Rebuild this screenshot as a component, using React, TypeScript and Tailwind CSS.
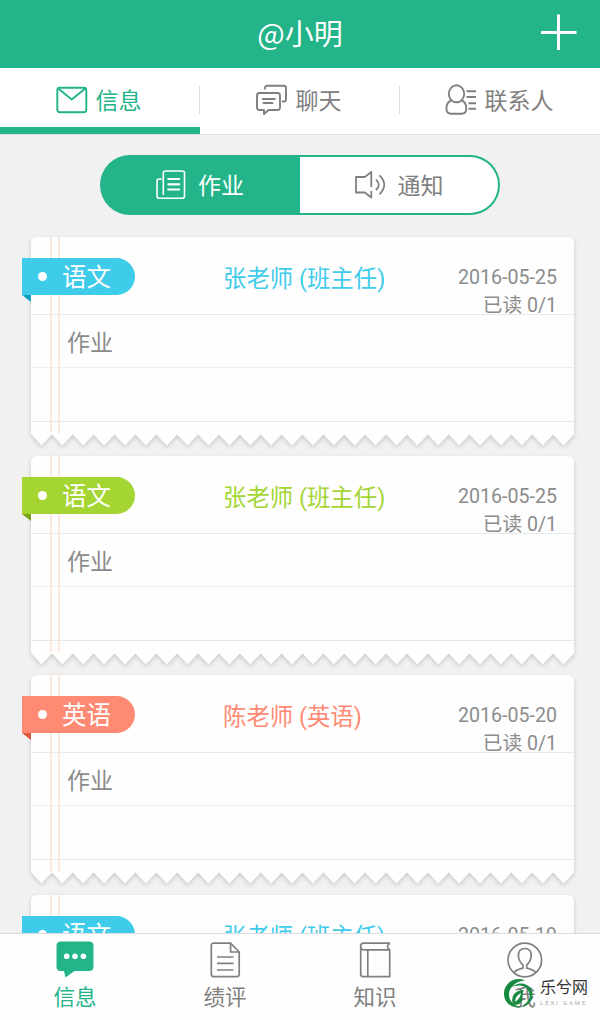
import clsx from "clsx";
import type { ReactNode } from "react";

type Notice = {
  id: number;
  subject: string;
  teacher: string;
  date: string;
  read: string;
  content: string;
  ribbon: string;
  fold: string;
  text: string;
};

const notices: Notice[] = [
  {
    id: 1,
    subject: "语文",
    teacher: "张老师 (班主任)",
    date: "2016-05-25",
    read: "已读 0/1",
    content: "作业",
    ribbon: "bg-[#3fcbea]",
    fold: "text-[#0f9dbb]",
    text: "text-[#3fcbea]",
  },
  {
    id: 2,
    subject: "语文",
    teacher: "张老师 (班主任)",
    date: "2016-05-25",
    read: "已读 0/1",
    content: "作业",
    ribbon: "bg-[#a4d533]",
    fold: "text-[#75a313]",
    text: "text-[#a4d533]",
  },
  {
    id: 3,
    subject: "英语",
    teacher: "陈老师 (英语)",
    date: "2016-05-20",
    read: "已读 0/1",
    content: "作业",
    ribbon: "bg-[#ff8a73]",
    fold: "text-[#d9573c]",
    text: "text-[#ff8a73]",
  },
  {
    id: 4,
    subject: "语文",
    teacher: "张老师 (班主任)",
    date: "2016-05-19",
    read: "已读 0/1",
    content: "作业",
    ribbon: "bg-[#3fcbea]",
    fold: "text-[#0f9dbb]",
    text: "text-[#3fcbea]",
  },
];

// torn paper edge
const TEETH = 26;
const toothWidth = 543 / TEETH;
const edgePath =
  "M0 0" +
  Array.from(
    { length: TEETH },
    (_, i) => `L${(i + 0.5) * toothWidth} 11.5L${(i + 1) * toothWidth} 0.5`
  ).join("") +
  "V0Z";

function Icon({ w, h, sw = 1.9, children }: { w: number; h: number; sw?: number; children: ReactNode }) {
  return (
    <svg
      width={w}
      height={h}
      viewBox={`0 0 ${w} ${h}`}
      fill="none"
      stroke="currentColor"
      strokeWidth={sw}
      strokeLinejoin="round"
      className="shrink-0"
    >
      {children}
    </svg>
  );
}

const MailIcon = () => (
  <Icon w={32} h={28}>
    <rect x="1.3" y="1.8" width="29" height="24.4" rx="2.5" />
    <path d="M2.5 2.8L15.7 13.5L29 2.8" />
  </Icon>
);

const ChatIcon = () => (
  <Icon w={32} h={32}>
    <path d="M9 5.5V3.8Q9 1.8 11 1.8H28Q30 1.8 30 3.8V15.5Q30 17.5 28 17.5H26" />
    <path d="M3.5 9H21.5Q24 9 24 11.5V23.5Q24 26 21.5 26H12.5L8 30V26H3.5Q1 26 1 23.5V11.5Q1 9 3.5 9Z" />
    <path d="M6.8 15H18.8M7.5 19H16.5" strokeLinecap="round" />
  </Icon>
);

const ContactIcon = () => (
  <Icon w={32} h={32}>
    <ellipse cx="11.5" cy="9.8" rx="7.7" ry="8.5" />
    <path d="M6.3 16.5Q1.4 18.2 1.4 24.5Q1.4 29.8 6.3 29.8H16.5Q21.3 29.8 21.3 24.5Q21.3 18.2 16.7 16.5" />
    <path d="M21.5 7.3H31M21.5 13H31M23.5 19.2H31M23.5 24.7H31" />
  </Icon>
);

const HomeworkIcon = () => (
  <Icon w={30} h={30} sw={1.6}>
    <path d="M7.3 25V3Q7.3 1 9.3 1H26.5Q28.5 1 28.5 3V26Q28.5 28.3 26.5 28.3H3.3Q1 28.3 1 26V11Q1 9 3 9H5.8" />
    <path d="M12.3 9H23.2M12.3 14.3H23.2M12.3 19.5H23.2" strokeWidth="2.2" strokeLinecap="round" />
  </Icon>
);

const SpeakerIcon = () => (
  <Icon w={32} h={30} sw={1.8}>
    <path d="M16.3 17V2L9.8 7H1V22.5H9.8L16.3 27.5V21" />
    <path d="M21 9.7Q26.5 14.8 21 20M24.5 5.3Q34 14.8 24.5 24.3" />
  </Icon>
);

const MessageIcon = () => (
  <Icon w={38} h={38}>
    <path
      d="M5 .5H33Q37.5 .5 37.5 5V25.5Q37.5 30 33 30H18.5L9.5 36.4L8 30H5Q.5 30 .5 25.5V5Q.5 .5 5 .5Z"
      fill="currentColor"
      stroke="none"
    />
    <g fill="#fff" stroke="none">
      <circle cx="10.7" cy="15.2" r="2.8" />
      <circle cx="19" cy="15.2" r="2.8" />
      <circle cx="27.4" cy="15.2" r="2.8" />
    </g>
  </Icon>
);

const ReportIcon = () => (
  <Icon w={38} h={38} sw={1.7}>
    <path d="M7.5 2.2H24.6L33.2 11V33Q33.2 35.7 30.5 35.7H8Q5.3 35.7 5.3 33V4.5Q5.3 2.2 7.5 2.2Z" />
    <path d="M24.6 2.2V11H33.2M11 16H27.5M11 22.4H27.5M11 29H27.5" />
  </Icon>
);

const BookIcon = () => (
  <Icon w={38} h={38} sw={1.7}>
    <path d="M34 2.2H7.5Q4.7 2.2 4.7 5V33Q4.7 35.7 7.5 35.7H33.7V8.8H7.5Q4.7 8.8 4.7 5.5M34 2.2Q29 5.5 33.7 8.8M11.8 8.8V35.7" />
  </Icon>
);

const MeIcon = () => (
  <Icon w={38} h={38} sw={1.7}>
    <circle cx="18.8" cy="19" r="16.8" />
    <path d="M7.8 31.7Q10 28.7 17 27.2V24.2Q13 20.5 12.4 15.5Q12 7.5 18.8 7.5Q25.7 7.5 25.2 15.5Q24.6 20.5 20.7 24.2V27.2Q27.8 28.7 29.8 31.7" />
  </Icon>
);

const tabs = [
  { label: "信息", icon: <MailIcon /> },
  { label: "聊天", icon: <ChatIcon /> },
  { label: "联系人", icon: <ContactIcon /> },
];

const navItems = [
  { label: "信息", icon: <MessageIcon /> },
  { label: "绩评", icon: <ReportIcon /> },
  { label: "知识", icon: <BookIcon /> },
  { label: "我", icon: <MeIcon /> },
];

function NoticeCard({ notice }: { notice: Notice }) {
  return (
    <article className="grid h-[219.2px] w-[543px] shrink-0">
      <div className="relative [grid-area:1/1] drop-shadow-[0_2px_2px_rgba(0,0,0,0.16)]">
        <div className="h-[197px] rounded-t-[6px] bg-[#fefefe]">
          <div className="h-[78px] border-b border-[#e3eceb]" />
          <div className="h-[53px] border-b border-[#e8f0ef]" />
          <div className="h-[54px] border-b border-[#e0e9e9]" />
        </div>
        <svg width="543" height="12" className="block">
          <path d={edgePath} fill="#fefefe" />
        </svg>
        <div className="absolute top-0 left-[19px] h-[196px] w-[10px] border-x-2 border-[#fce9dc]" />
      </div>

      <div className="relative [grid-area:1/1]">
        <div className="flex h-[78px] items-start pt-[21px]">
          <div className="-ml-[9px] w-[113px]">
            <div
              className={clsx(
                "flex h-[37px] items-center rounded-r-full pl-[16px] text-[24.5px] text-white",
                notice.ribbon
              )}
            >
              <span className="mr-[15px] size-[9px] rounded-full bg-white" />
              <span className="pt-[2px] leading-[37px]">{notice.subject}</span>
            </div>
            <svg width="9" height="7" className={clsx("block", notice.fold)}>
              <path d="M0 0H9V7Z" fill="currentColor" />
            </svg>
          </div>
          <h3 className={clsx("ml-[88px] pt-px text-[23.4px] leading-[40px]", notice.text)}>
            {notice.teacher}
          </h3>
          <div className="mt-[6px] mr-[17px] ml-auto text-right text-[19.6px] leading-[27.5px] text-[#8c8c8c]">
            <p>{notice.date}</p>
            <p>{notice.read}</p>
          </div>
        </div>
        <p className="pt-[2px] pl-[36px] text-[23px] leading-[54px] text-[#8a8a8a]">{notice.content}</p>
      </div>
    </article>
  );
}

export default function App() {
  return (
    <div className="relative flex h-[1020px] w-[600px] flex-col overflow-hidden bg-[#f1f1f1] font-[Roboto,'Noto_Sans_CJK_SC',sans-serif] text-[#808080]">
      <header className="grid h-[68px] shrink-0 grid-cols-[1fr_auto_1fr] items-center bg-[#23b489] text-white">
        <h1 className="col-start-2 pb-[4px] font-['Noto_Sans_CJK_SC',sans-serif] text-[29px] leading-[64px]">
          @小明
        </h1>
        <button className="mr-[23px] mb-[4px] justify-self-end">
          <Icon w={37} h={37} sw={3}>
            <path d="M18.5 0.5V36M1 18.5H36.5" />
          </Icon>
        </button>
      </header>

      <nav className="grid h-[67px] shrink-0 grid-cols-3 border-b border-[#dedede] bg-white">
        {tabs.map((tab, i) => (
          <button
            key={tab.label}
            className={clsx(
              "flex items-center text-[23px]",
              i === 0 ? "border-b-[7px] border-[#23b489] pt-[5px] text-[#23b489]" : "pb-[2px]"
            )}
          >
            <span className="flex flex-1 items-center justify-center gap-[8px] pr-[2px]">
              {tab.icon}
              <span className="pt-[4px] leading-[34px]">{tab.label}</span>
            </span>
            {i < 2 && <span className="h-[28px] w-px bg-[#dedede]" />}
          </button>
        ))}
      </nav>

      <main className="flex min-h-0 flex-1 flex-col overflow-hidden pt-[20px] pl-[31px]">
        <div className="ml-[69px] grid h-[60px] w-[400px] shrink-0 grid-cols-2 text-[23px]">
          <button className="flex items-center justify-center gap-[12px] rounded-l-full bg-[#23b489] text-white">
            <HomeworkIcon />
            <span className="pt-[4px] leading-[34px]">作业</span>
          </button>
          <button className="flex items-center justify-center gap-[11px] rounded-r-full border-y-2 border-r-2 border-[#23b489] bg-white">
            <SpeakerIcon />
            <span className="pt-[4px] leading-[34px]">通知</span>
          </button>
        </div>

        <section className="mt-[22px] flex flex-col">
          {notices.map((notice) => (
            <NoticeCard key={notice.id} notice={notice} />
          ))}
        </section>
      </main>

      <footer className="grid h-[87px] shrink-0 grid-cols-4 border-t border-[#dcdcdc] bg-[#fefefe]">
        {navItems.map((item, i) => (
          <button
            key={item.label}
            className={clsx("flex flex-col items-center pt-[7px] text-[21.5px]", i === 0 && "text-[#23b489]")}
          >
            {item.icon}
            <span className="leading-[37px]">{item.label}</span>
          </button>
        ))}
      </footer>

      {/* site badge */}
      <div className="absolute top-[978px] left-[503px] flex items-start">
        <svg width="31" height="31" viewBox="0 0 31 31" fill="none">
          <path
            d="M22 2.5C12-2 1 5 1 15.5C1 25 9 31 18 29C11 28 6 23 6 16.5C6 9 13 3 22 2.5Z"
            fill="#168a3f"
          />
          <path
            d="M8 10C13 4 23 4 27.5 10C33 19 26 29 17 29C25 26 29 19 25.5 13C22 7 14 6 8 10Z"
            fill="#168a3f"
          />
          <path
            d="M21 12C13 12 8 17 9.5 25C12 28 17 27 19 23C21 19 18 17 21 12Z"
            fill="#168a3f"
          />
          <path d="M18 15Q12 18 12 24Q17 21 18 15Z" fill="#fff" />
        </svg>
        <div className="ml-[6px] text-[#333]">
          <p className="text-[16px] leading-[20px]">乐兮网</p>
          <p className="mt-[2px] text-[6px] leading-[6px] tracking-[1.9px] text-[#aaa]">LEXI GAME</p>
        </div>
      </div>
    </div>
  );
}
